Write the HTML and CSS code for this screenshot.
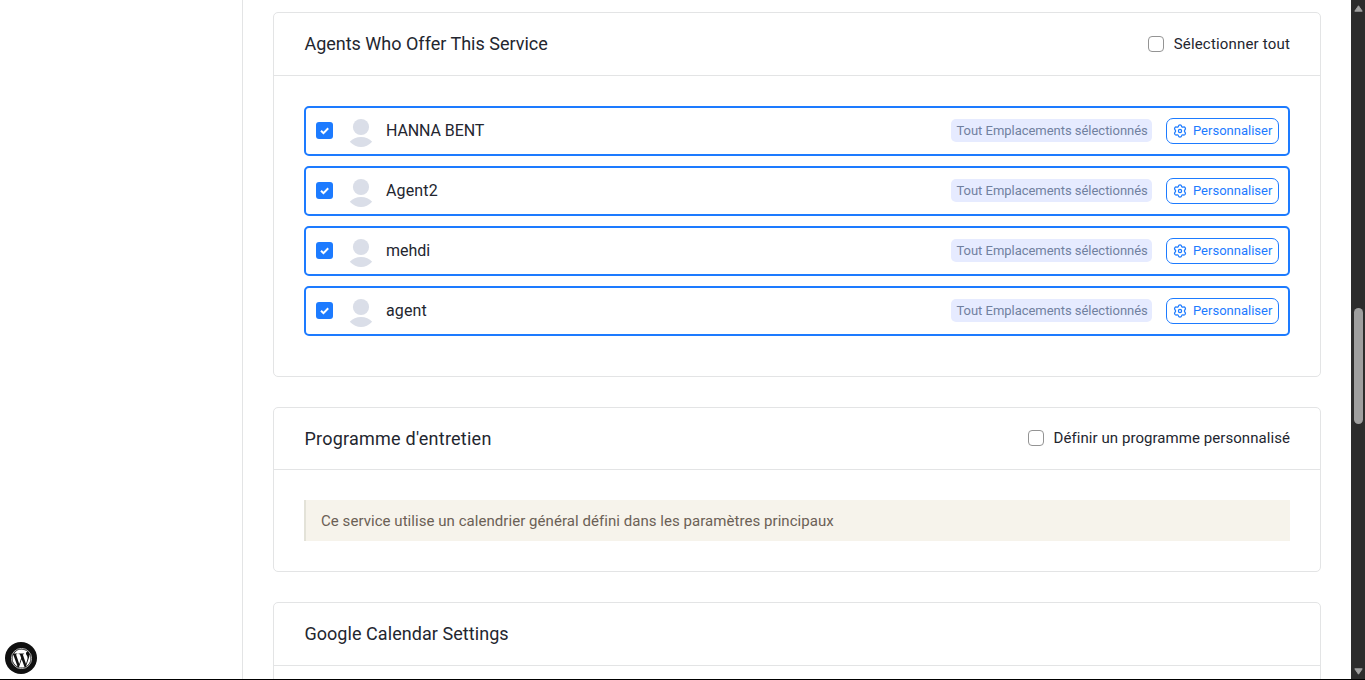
FILE: index.html
```html
<!DOCTYPE html>
<html lang="fr">
<head>
<meta charset="utf-8">
<title>Service</title>
<link rel="stylesheet" href="styles.css">
</head>
<body>
<svg class="defs" aria-hidden="true">
  <symbol id="gear" viewBox="0 0 24 24"><path d="M9.300 3.500Q9.700 1.600 12 1.600t2.700 1.900q.4 2.600 3 1.700 2-.8 3.200 1.200t-.4 3.400q-2 2.200 0 4.400 1.600 1.400.4 3.400t-3.200 1.200q-2.600-.9-3 1.700-.4 1.900-2.700 1.900t-2.700-1.900q-.4-2.600-3-1.700-2 .8-3.200-1.200t.4-3.400q2-2.200 0-4.400-1.600-1.400-.4-3.400t3.200-1.200q2.600.9 3-1.700z" fill="none" stroke="currentColor" stroke-width="2.200" stroke-linejoin="round"/><circle cx="12" cy="12" r="2.700" fill="none" stroke="currentColor" stroke-width="2.200"/></symbol>
  <symbol id="person" viewBox="0 0 24 30"><circle cx="12" cy="9" r="8.100"/><path d="M.8 23.800Q5 19 12 19t11.200 4.800Q18 29 12 29T.8 23.800z"/></symbol>
  <symbol id="check" viewBox="0 0 17 17"><path d="M5 8.700l2.500 2.400L12.200 6.300" fill="none" stroke="#fff" stroke-width="2"/></symbol>
</svg>
<div class="screen">
  <aside class="side"></aside>
  <main class="content">
    <section class="card">
      <header class="card-head">
        <h3 class="title">Agents Who Offer This Service</h3>
        <label class="option o-all"><span class="box"></span><span>Sélectionner tout</span></label>
      </header>
      <div class="card-body">
        <div class="agent"><svg class="tick"><use href="#check"/></svg><svg class="avatar"><use href="#person"/></svg><span class="name caps">HANNA BENT</span><span class="badge">Tout Emplacements sélectionnés</span><a class="custom"><svg class="gear"><use href="#gear"/></svg><span>Personnaliser</span></a></div>
        <div class="agent"><svg class="tick"><use href="#check"/></svg><svg class="avatar"><use href="#person"/></svg><span class="name wide">Agent2</span><span class="badge">Tout Emplacements sélectionnés</span><a class="custom"><svg class="gear"><use href="#gear"/></svg><span>Personnaliser</span></a></div>
        <div class="agent"><svg class="tick"><use href="#check"/></svg><svg class="avatar"><use href="#person"/></svg><span class="name">mehdi</span><span class="badge">Tout Emplacements sélectionnés</span><a class="custom"><svg class="gear"><use href="#gear"/></svg><span>Personnaliser</span></a></div>
        <div class="agent"><svg class="tick"><use href="#check"/></svg><svg class="avatar"><use href="#person"/></svg><span class="name wide">agent</span><span class="badge">Tout Emplacements sélectionnés</span><a class="custom"><svg class="gear"><use href="#gear"/></svg><span>Personnaliser</span></a></div>
      </div>
    </section>
    <section class="card">
      <header class="card-head short">
        <h3 class="title t-prog">Programme d'entretien</h3>
        <label class="option o-prog"><span class="box"></span><span>Définir un programme personnalisé</span></label>
      </header>
      <div class="card-body">
        <div class="notice">Ce service utilise un calendrier général défini dans les paramètres principaux</div>
      </div>
    </section>
    <section class="card">
      <header class="card-head"><h3 class="title t-goog">Google Calendar Settings</h3></header>
      <div class="card-body"></div>
    </section>
  </main>
  <div class="scroll">
    <svg class="arrow" viewBox="0 0 9 7"><path d="M4.500 .8L8.200 6.200H.8z"/></svg>
    <div class="thumb"></div>
    <svg class="arrow down" viewBox="0 0 9 7"><path d="M.8 .8h7.400L4.500 6.200z"/></svg>
  </div>
</div>
<div class="wp"><svg viewBox="0 0 122.520 122.520"><path d="m8.708 61.260c0 20.802 12.089 38.779 29.619 47.298l-25.069-68.686c-2.916 6.536-4.550 13.769-4.550 21.388z"/><path d="m96.740 58.608c0-6.495-2.333-10.993-4.334-14.494-2.664-4.329-5.161-7.995-5.161-12.324 0-4.831 3.664-9.328 8.825-9.328.233 0 .454.029.681.042-9.350-8.566-21.807-13.796-35.489-13.796-18.360 0-34.513 9.420-43.910 23.688 1.233.037 2.395.063 3.382.063 5.497 0 14.006-.667 14.006-.667 2.833-.167 3.167 3.994.337 4.329 0 0-2.847.335-6.015.501l19.138 56.925 11.501-34.493-8.188-22.434c-2.830-.166-5.511-.501-5.511-.501-2.832-.166-2.500-4.496.332-4.329 0 0 8.679.667 13.843.667 5.496 0 14.006-.667 14.006-.667 2.835-.167 3.168 3.994.337 4.329 0 0-2.853.335-6.015.501l18.992 56.494 5.242-17.517c2.272-7.269 4.001-12.490 4.001-16.989z"/><path d="m62.184 65.857-15.768 45.819c4.708 1.384 9.687 2.141 14.846 2.141 6.120 0 11.989-1.058 17.452-2.979-.141-.225-.269-.464-.374-.724z"/><path d="m107.376 36.046c.226 1.674.354 3.471.354 5.404 0 5.333-.996 11.328-3.996 18.824l-16.053 46.413c15.624-9.111 26.133-26.038 26.133-45.426.001-9.137-2.333-17.729-6.438-25.215z"/><circle class="ring" cx="61.260" cy="61.260" r="59"/></svg></div>
</body>
</html>
```
FILE: styles.css
```css
* { box-sizing: border-box; }
body { margin: 0; background: #fff; color: #23262f; font-family: Roboto, "Liberation Sans", sans-serif; overflow: hidden; }
.defs { position: absolute; width: 0; height: 0; }
.screen { display: flex; height: 680px; overflow: hidden; border-bottom: 1px solid #000; }
.side { width: 243px; flex: none; border-right: 1px solid #e3e4e5; }
.content { flex: 1; min-width: 0; padding: 12px 30px 0; display: flex; flex-direction: column; gap: 30px; }
.card { flex: none; border: 1px solid #e3e4e5; border-radius: 5px; }
.card-head { height: 63px; padding: 0 30px; display: flex; align-items: center; justify-content: space-between; border-bottom: 1px solid #e3e4e5; }
.card-head.short { height: 62px; }
.card-body { padding: 30px; }
.title { margin: 0; font-size: 18px; font-weight: 400; line-height: 24px; white-space: nowrap; padding-left: .4px; }
.t-prog { letter-spacing: .24px; }
.t-goog { letter-spacing: .06px; }
.option { display: flex; align-items: center; gap: 10px; font-size: 15px; line-height: 20px; white-space: nowrap; }
.o-all { letter-spacing: .18px; }
.o-prog { letter-spacing: .06px; padding-bottom: 2px; }
.box { width: 16px; height: 16px; border: 1px solid #949494; border-radius: 4px; }
.agent { height: 50px; margin-bottom: 10px; border: 2px solid #1d7bff; border-radius: 5px; padding: 0 9px 0 10px; display: flex; align-items: center; }
.tick { width: 17px; height: 17px; background: #1d7bff; border-radius: 3px; margin-bottom: 1px; }
.avatar { width: 24px; height: 30px; margin: 4px 13px 0 16px; fill: #dadee8; }
.name { flex: 1; font-size: 16px; line-height: 20px; }
.name.caps { letter-spacing: -.1px; }
.name.wide { letter-spacing: .15px; }
.badge { width: 201px; height: 23px; border-radius: 5px; background: #e6ebff; color: #71819f; font-size: 13px; line-height: 23px; padding-left: 5.5px; margin: 0 14px 1px 0; letter-spacing: -.03px; white-space: nowrap; }
.custom { width: 113px; height: 26px; border: 1px solid #1d7bff; border-radius: 7px; color: #1d7bff; font-size: 13px; line-height: 24px; display: flex; align-items: center; gap: 6px; padding-left: 6px; white-space: nowrap; }
.gear { width: 14px; height: 14px; }
.notice { height: 41px; border-left: 2px solid #e3e2d8; background: #f6f3eb; color: #6b6055; font-size: 15px; line-height: 42px; padding-left: 15px; letter-spacing: .05px; white-space: nowrap; }
.scroll { width: 14px; flex: none; background: #2c2c2c; display: flex; flex-direction: column; align-items: center; padding: 5px 0 4px; }
.arrow { width: 9px; height: 7px; fill: #a0a0a0; stroke: #a0a0a0; stroke-width: 1; stroke-linejoin: round; }
.arrow.down { margin-top: auto; }
.thumb { width: 9px; height: 116px; border-radius: 5px; background: #9f9f9f; margin-top: 296px; }
.wp { position: absolute; left: 5px; top: 642px; width: 32px; height: 32px; border-radius: 50%; background: #101010; display: grid; place-items: center; }
.wp svg { width: 21px; height: 21px; fill: #fff; }
.ring { fill: none; stroke: #fff; stroke-width: 4; }
```
